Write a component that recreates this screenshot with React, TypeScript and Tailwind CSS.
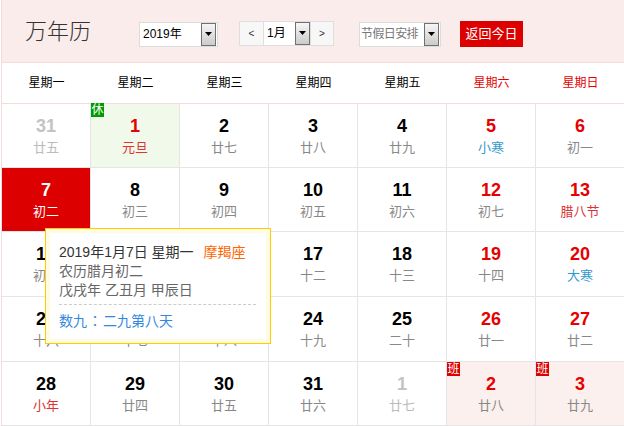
import React from "react";

type Day = {
  n: string;
  l: string;
  numC: string;
  lunC: string;
  bg?: string;
  badge?: "rest" | "work";
};

const K = "text-black";
const R = "text-[#e60000]";
const G = "text-[#c3c3c3]";
const LG = "text-[#888888]";
const LL = "text-[#bbbbbb]";
const FR = "text-[#dd3333]";
const TB = "text-[#3399cc]";

const rows: Day[][] = [
  [
    { n: "31", l: "廿五", numC: G, lunC: LL },
    { n: "1", l: "元旦", numC: R, lunC: FR, bg: "bg-[#f0f9ea]", badge: "rest" },
    { n: "2", l: "廿七", numC: K, lunC: LG },
    { n: "3", l: "廿八", numC: K, lunC: LG },
    { n: "4", l: "廿九", numC: K, lunC: LG },
    { n: "5", l: "小寒", numC: R, lunC: TB },
    { n: "6", l: "初一", numC: R, lunC: LG },
  ],
  [
    { n: "7", l: "初二", numC: "text-white", lunC: "text-white", bg: "bg-[#dd0000]" },
    { n: "8", l: "初三", numC: K, lunC: LG },
    { n: "9", l: "初四", numC: K, lunC: LG },
    { n: "10", l: "初五", numC: K, lunC: LG },
    { n: "11", l: "初六", numC: K, lunC: LG },
    { n: "12", l: "初七", numC: R, lunC: LG },
    { n: "13", l: "腊八节", numC: R, lunC: FR },
  ],
  [
    { n: "14", l: "初九", numC: K, lunC: LG },
    { n: "15", l: "初十", numC: K, lunC: LG },
    { n: "16", l: "十一", numC: K, lunC: LG },
    { n: "17", l: "十二", numC: K, lunC: LG },
    { n: "18", l: "十三", numC: K, lunC: LG },
    { n: "19", l: "十四", numC: R, lunC: LG },
    { n: "20", l: "大寒", numC: R, lunC: TB },
  ],
  [
    { n: "21", l: "十六", numC: K, lunC: LG },
    { n: "22", l: "十七", numC: K, lunC: LG },
    { n: "23", l: "十八", numC: K, lunC: LG },
    { n: "24", l: "十九", numC: K, lunC: LG },
    { n: "25", l: "二十", numC: K, lunC: LG },
    { n: "26", l: "廿一", numC: R, lunC: LG },
    { n: "27", l: "廿二", numC: R, lunC: LG },
  ],
  [
    { n: "28", l: "小年", numC: K, lunC: FR },
    { n: "29", l: "廿四", numC: K, lunC: LG },
    { n: "30", l: "廿五", numC: K, lunC: LG },
    { n: "31", l: "廿六", numC: K, lunC: LG },
    { n: "1", l: "廿七", numC: G, lunC: LL },
    { n: "2", l: "廿八", numC: R, lunC: LG, bg: "bg-[#fbf0ee]", badge: "work" },
    { n: "3", l: "廿九", numC: R, lunC: LG, bg: "bg-[#fbf0ee]", badge: "work" },
  ],
];

const rowH = ["h-[64px]", "h-[64px]", "h-[65px]", "h-[65px]", "h-[64px]"];

const weeks = [
  { t: "星期一", c: "text-black" },
  { t: "星期二", c: "text-black" },
  { t: "星期三", c: "text-black" },
  { t: "星期四", c: "text-black" },
  { t: "星期五", c: "text-black" },
  { t: "星期六", c: "text-[#e60000]" },
  { t: "星期日", c: "text-[#e60000]" },
];

function DropBtn() {
  return (
    <div className="shrink-0 w-[15px] h-[23px] border border-[#707070] bg-linear-to-b from-[#f6f6f6] to-[#cbcbcb] flex items-center justify-center">
      <svg width="7" height="4" viewBox="0 0 7 4">
        <polygon points="0,0 7,0 3.5,4" fill="#000" />
      </svg>
    </div>
  );
}

export default function App() {
  return (
    <div className="w-[624px] h-[426px] overflow-hidden bg-white font-['Liberation_Sans','Noto_Sans_CJK_SC',sans-serif]">
      <div className="relative ml-[1px] border-l border-[#f3dcdc]">
        {/* Header */}
        <div className="h-[63px] border-b border-[#f3dcdc] bg-[#f9ecea] flex items-center pt-[6px] pl-[23px]">
          <div className="w-[114px] mb-[10px] text-[22px] leading-[26px] text-[#333] font-light font-['Noto_Sans_CJK_SC',sans-serif]">
            万年历
          </div>
          <div className="w-[79px] h-[25px] border border-[#dcdcdc] bg-white flex items-center justify-between pl-[3px] pr-[1px] text-[12px] text-black">
            <span>2019年</span>
            <DropBtn />
          </div>
          <div className="ml-[21px] flex items-center -mt-[2px]">
            <div className="w-[25px] h-[25px] border border-[#dedede] bg-[#f7f7f7] flex items-center justify-center text-[10px] text-[#333]">
              &lt;
            </div>
            <div className="w-[46px] h-[25px] border-y border-[#dedede] bg-white flex items-center justify-between pl-[3px] text-[12px] text-black">
              <span>1月</span>
              <DropBtn />
            </div>
            <div className="w-[24px] h-[25px] border border-[#dedede] bg-[#f7f7f7] flex items-center justify-center text-[10px] text-[#333]">
              &gt;
            </div>
          </div>
          <div className="ml-[25px] w-[82px] h-[25px] border border-[#dcdcdc] bg-white flex items-center justify-between pl-[1px] pr-[1px] text-[12px] text-[#777]">
            <span className="whitespace-nowrap tracking-[-0.6px]">节假日安排</span>
            <DropBtn />
          </div>
          <div className="ml-[19px] w-[63px] h-[26px] bg-[#dd0000] text-white text-[13px] flex items-center justify-center">
            返回今日
          </div>
        </div>

        {/* Week header */}
        <div className="grid grid-cols-[repeat(7,89px)] h-[41px] border-b border-[#f3dcdc] bg-white">
          {weeks.map((w) => (
            <div key={w.t} className={`flex items-center justify-center text-[12px] ${w.c}`}>
              {w.t}
            </div>
          ))}
        </div>

        {/* Days */}
        {rows.map((row, ri) => (
          <div key={ri} className={`grid grid-cols-[repeat(7,89px)] ${rowH[ri]}`}>
            {row.map((d, ci) => (
              <div
                key={ci}
                className={`relative border-r border-b border-[#e5e5e5] flex flex-col items-center pt-[12px] ${d.bg ?? "bg-white"}`}
              >
                {d.badge === "rest" && (
                  <div className="absolute -top-[1px] left-0 w-[13px] h-[14px] bg-[#009900] text-white text-[12px] leading-[14px] flex items-center justify-center">
                    休
                  </div>
                )}
                {d.badge === "work" && (
                  <div className="absolute top-0 left-0 w-[13px] h-[14px] bg-[#dd0000] text-white text-[12px] leading-[14px] flex items-center justify-center">
                    班
                  </div>
                )}
                <div className={`text-[18px] leading-[20px] font-bold ${d.numC}`}>{d.n}</div>
                <div className={`mt-[2px] text-[13px] leading-[20px] ${d.lunC}`}>{d.l}</div>
              </div>
            ))}
          </div>
        ))}

        {/* Tooltip */}
        <div className="absolute left-[43px] top-[228px] w-[226px] h-[116px] border border-[#ffcc00] bg-[#fffbe0] p-[4px]">
          <div className="h-full bg-white pl-[9px] pr-[10px] pt-[10px] text-[14px] leading-[19px]">
            <div className="text-[#333] whitespace-nowrap">
              2019年1月7日 星期一<span className="ml-[10px] text-[#ff6600]">摩羯座</span>
            </div>
            <div className="text-[#666]">农历腊月初二</div>
            <div className="text-[#666]">戊戌年 乙丑月 甲辰日</div>
            <div className="mt-[4px] mb-[6px] border-t border-dashed border-[#cccccc]" />
            <div className="text-[#3388dd] whitespace-nowrap">
              数九<span className="inline-block w-[16px] text-center font-['Noto_Sans_CJK_TC',sans-serif]">：</span>二九第八天
            </div>
          </div>
        </div>
      </div>
    </div>
  );
}
